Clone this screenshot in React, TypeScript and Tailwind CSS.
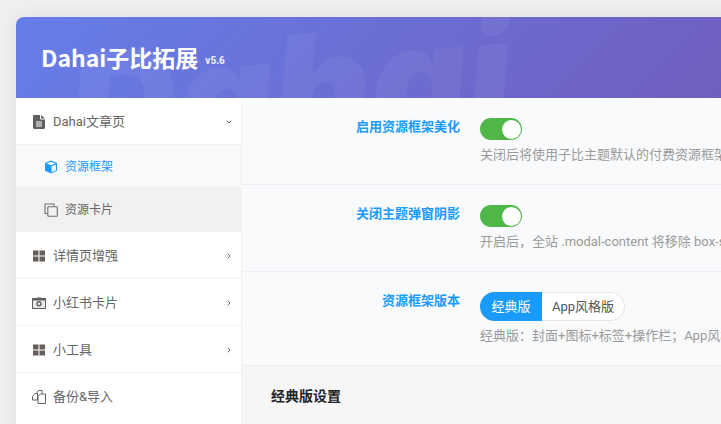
import type { ReactNode } from "react";
import { ChevronDown, ChevronRight } from "lucide-react";

const font = "font-['Roboto','Noto_Sans_CJK_SC',sans-serif]";

function DocIcon() {
  return (
    <svg viewBox="0 0 12 14" className="w-3 h-3.5 text-[#5f5f5f]" fill="currentColor">
      <path d="M0 1.2C0 .5.5 0 1.2 0H7v3.6c0 .5.4.9.9.9H12v8.3c0 .7-.5 1.2-1.2 1.2H1.2C.5 14 0 13.500 0 12.800Z" />
      <path d="M8 0l4 3.500H8Z" />
      <path d="M3 6.500h6v1H3zM3 8.500h6v1H3zM3 10.500h6v1H3z" fill="#fff" />
    </svg>
  );
}

function GridIcon() {
  return (
    <svg viewBox="0 0 12 12" className="w-3 h-3" fill="#665f5c">
      <rect x="0" y="0.500" width="5.500" height="5" />
      <rect x="6.500" y="0.500" width="5.500" height="5" />
      <rect x="0" y="6.500" width="5.500" height="5" />
      <rect x="6.500" y="6.500" width="5.500" height="5" />
    </svg>
  );
}

function CameraIcon() {
  return (
    <svg viewBox="0 0 14 12" className="w-3.5 h-3">
      <rect x="0.500" y="1.500" width="13" height="10" fill="#e9e9e9" stroke="#5f5f5f" />
      <path d="M1 2h3l1-1.500h4L10 2h3v1.500H1z" fill="#5f5f5f" />
      <circle cx="7" cy="6.800" r="2.700" fill="#5f5f5f" />
      <circle cx="7" cy="6.800" r="1.300" fill="#eee" />
    </svg>
  );
}

function BackupIcon() {
  return (
    <svg viewBox="0 0 14 14" className="w-3.5 h-3.5" fill="none" stroke="#5f5f5f" strokeWidth="1">
      <path d="M.5 10V6.500l2.500-3h2.500V10Z" fill="#fff" />
      <path d="M5 4V2.500L6.500.5h3.500v3" />
      <path d="M6 13.500V6.500l2.500-2.500h5v9.500Z" fill="#fff" />
    </svg>
  );
}

function CubeIcon() {
  return (
    <svg viewBox="0 0 14 14" className="w-3.5 h-3.5">
      <path d="M7 .5 13 3v7.800L7 13.500 1 10.800V3Z" fill="#1a9bfc" />
      <path d="M7 1.800 11.200 3.500 7 5.200 2.800 3.500Z" fill="#fff" />
      <path d="M7.500 6.200 12 4.400v5.800L7.500 12.200Z" fill="#fff" opacity="0.900" />
    </svg>
  );
}

function CopyIcon() {
  return (
    <svg viewBox="0 0 14 14" className="w-3.5 h-3.5" fill="none" stroke="#6f6f6f" strokeWidth="1.100">
      <path d="M3 10.500H1V1h9v2" />
      <rect x="3.800" y="3.800" width="9.500" height="9.500" rx="0.800" />
    </svg>
  );
}

function MenuItem({ icon, label, open }: { icon: ReactNode; label: string; open?: boolean }) {
  return (
    <div className="h-[47px] flex items-center pl-4 pr-[8px] pt-px bg-white border-b border-[#f1f1f3] text-[13px] text-[#666]">
      <span className="w-[14px] flex justify-center mr-[7px] shrink-0">{icon}</span>
      <span className="flex-1">{label}</span>
      {open ? (
        <ChevronDown className="w-2 h-2 text-[#666]" strokeWidth={3} />
      ) : (
        <ChevronRight className="w-2 h-2 text-[#666]" strokeWidth={3} />
      )}
    </div>
  );
}

function Toggle() {
  return (
    <div className="w-[42px] h-[22px] rounded-full bg-[#4fb748] flex items-center justify-end pr-[1px]">
      <div className="w-[19px] h-[19px] rounded-full bg-white" />
    </div>
  );
}

function Row({ label, hint, children, last }: { label: string; hint: string; children: ReactNode; last?: boolean }) {
  return (
    <div className={`flex pt-5 border-b border-[#eeeff2] ${last ? "h-[94px]" : "h-[87px]"}`}>
      <div className="w-[218px] shrink-0 text-right text-[13px] font-bold leading-[18px] text-[#1a9bfc]">{label}</div>
      <div className="ml-5 min-w-0">
        {children}
        <p className="mt-[5px] text-[13px] leading-5 whitespace-nowrap text-[#9a9a9a]">{hint}</p>
      </div>
    </div>
  );
}

export default function App() {
  return (
    <div className={`${font} h-[424px] w-[721px] overflow-hidden bg-[#f0f0f1] pt-[17px] pl-4`}>
      <div className="w-[1180px] h-[500px] rounded-t-lg overflow-hidden shadow-[0_0_20px_rgba(0,0,0,0.08)]">
        <header className="relative h-[81px] overflow-hidden bg-[linear-gradient(135deg,#667eea,#764ba2)] flex items-center pl-[25px]">
          <span className="absolute left-[52px] top-[-2px] text-[150px] leading-none font-['Inter',sans-serif] font-black italic rotate-[-5deg] text-white/[0.05]">
            Dahai
          </span>
          <h1 className="relative text-[23px] font-bold font-['Noto_Sans_CJK_SC',sans-serif] text-white leading-none">Dahai子比拓展</h1>
          <span className="relative ml-[7px] mt-[5px] text-[10px] font-bold text-white/90">v5.6</span>
        </header>
        <div className="flex h-[419px]">
          <aside className="w-[226px] shrink-0 bg-white border-r border-[#f1f1f3]">
            <MenuItem icon={<DocIcon />} label="Dahai文章页" open />
            <div className="h-[42px] flex items-center pl-[28px] pt-[2px] bg-[#f8f9fb] text-xs text-[#1a9bfc]">
              <CubeIcon />
              <span className="ml-[7px]">资源框架</span>
            </div>
            <div className="h-[45px] flex items-center pl-[28px] bg-[#f1f1f1] text-xs text-[#666]">
              <CopyIcon />
              <span className="ml-[7px]">资源卡片</span>
            </div>
            <MenuItem icon={<GridIcon />} label="详情页增强" />
            <MenuItem icon={<CameraIcon />} label="小红书卡片" />
            <MenuItem icon={<GridIcon />} label="小工具" />
            <div className="h-[47px] flex items-center pl-4 text-[13px] text-[#666]">
              <span className="w-[14px] flex justify-center mr-[7px] shrink-0">
                <BackupIcon />
              </span>
              <span>备份&amp;导入</span>
            </div>
          </aside>
          <main className="flex-1 min-w-0 bg-[#f6f6f7]">
            <div className="bg-[#f9fafc]">
              <Row label="启用资源框架美化" hint="关闭后将使用子比主题默认的付费资源框架样式">
                <Toggle />
              </Row>
              <Row label="关闭主题弹窗阴影" hint="开启后，全站 .modal-content 将移除 box-shadow 阴影效果">
                <Toggle />
              </Row>
              <Row label="资源框架版本" hint="经典版：封面+图标+标签+操作栏；App风格版：仿应用商店样式" last>
                <div className="inline-flex h-[29px] text-[13px]">
                  <span className="w-[62px] rounded-l-full bg-[#1a9bfc] text-white flex items-center justify-center">经典版</span>
                  <span className="w-[83px] rounded-r-full bg-white border border-l-0 border-[#e5e5e7] text-[#555] flex items-center justify-center">App风格版</span>
                </div>
              </Row>
            </div>
            <h2 className="pl-[29px] pt-[20px] text-sm font-bold leading-5 text-[#222]">经典版设置</h2>
          </main>
        </div>
      </div>
    </div>
  );
}
